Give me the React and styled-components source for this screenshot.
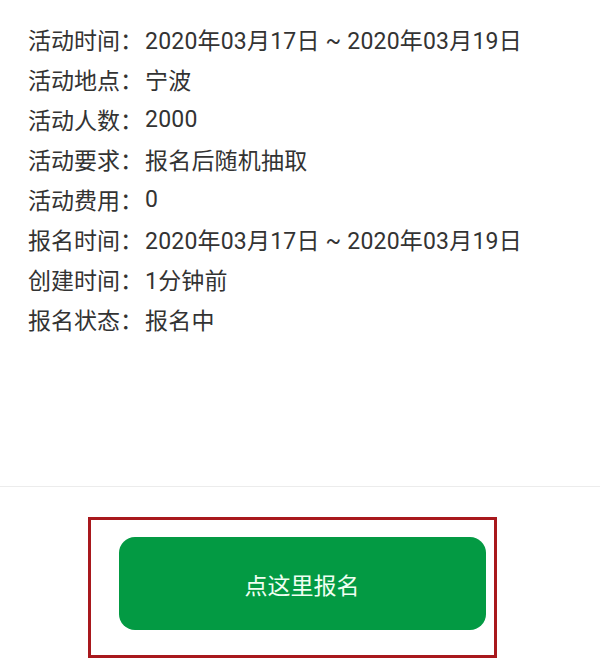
import React from 'react'
import styled, { createGlobalStyle } from 'styled-components'

const GlobalStyle = createGlobalStyle`
  html, body {
    margin: 0;
    padding: 0;
    background: #ffffff;
  }
  body {
    font-family: Roboto, "Noto Sans CJK SC", sans-serif;
  }
`

const rows = [
  ['活动时间', '2020年03月17日 ~ 2020年03月19日'],
  ['活动地点', '宁波'],
  ['活动人数', '2000'],
  ['活动要求', '报名后随机抽取'],
  ['活动费用', '0'],
  ['报名时间', '2020年03月17日 ~ 2020年03月19日'],
  ['创建时间', '1分钟前'],
  ['报名状态', '报名中'],
]

const App = () => {
  return (
    <>
      <GlobalStyle />
      <Page>
        <InfoList>
          {rows.map(([label, value]) => (
            <InfoRow key={label}>
              <Label>{label}：</Label>
              <Value>{value}</Value>
            </InfoRow>
          ))}
        </InfoList>
        <Footer>
          <Highlight />
          <SignupButton>点这里报名</SignupButton>
        </Footer>
      </Page>
    </>
  )
}

export default App

const Page = styled.div`
  width: 600px;
  height: 670px;
  display: flex;
  flex-direction: column;
  background: #fff;
  overflow: hidden;
`

const InfoList = styled.div`
  height: 487px;
  box-sizing: border-box;
  padding: 19px 28px 0;
  border-bottom: 1px solid #ececec;
`

const InfoRow = styled.div`
  display: flex;
  height: 40px;
  align-items: center;
  font-size: 23px;
  color: #333333;
  white-space: nowrap;
`

const Label = styled.span``

const Value = styled.span`
  margin-left: 2px;
  letter-spacing: 0.2px;
`

const Footer = styled.div`
  position: relative;
  flex: 1;
  display: flex;
  justify-content: center;
  align-items: flex-start;
  padding-top: 50px;
`

const Highlight = styled.div`
  position: absolute;
  left: 88px;
  top: 30px;
  width: 409px;
  height: 141px;
  box-sizing: border-box;
  border: 3px solid #a8181d;
  pointer-events: none;
`

const SignupButton = styled.button`
  width: 367px;
  height: 93px;
  border: none;
  border-radius: 16px;
  background: #039a43;
  color: #f0fff2;
  font-family: "Noto Sans CJK SC", sans-serif;
  font-size: 23px;
  cursor: pointer;
  margin-left: 4px;
`
